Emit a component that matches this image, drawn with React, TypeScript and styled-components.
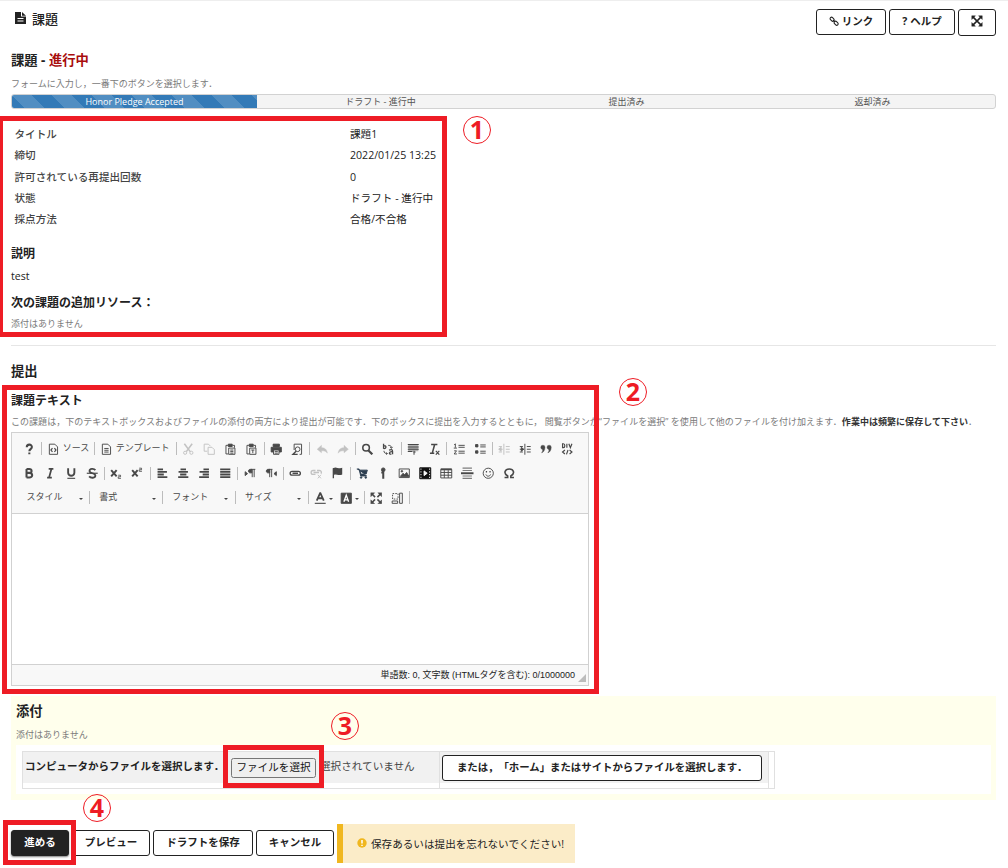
import React from "react";
import styled, { createGlobalStyle, css } from "styled-components";

const Global = createGlobalStyle`
  * { box-sizing: border-box; }
  html, body { margin: 0; padding: 0; background: #fff; }
  body {
    width: 1008px; height: 868px; overflow: hidden;
    font-family: "Open Sans", "Noto Sans CJK JP", sans-serif;
    font-size: 10.6px; color: #222;
    text-spacing-trim: space-all;
  }
`;

const Page = styled.main`
  position: relative;
  width: 1008px;
  height: 868px;
  overflow: hidden;
  border-top: 1px solid #eeeeee;
  padding: 0 12px 0 11px;
  display: flex;
  flex-direction: column;
  white-space: nowrap;
`;

const Header = styled.header`
  height: 38px;
  display: flex;
  justify-content: space-between;
  align-items: flex-start;
`;

const ToolTitle = styled.div`
  display: flex;
  align-items: center;
  gap: 6px;
  height: 22px;
  margin: 6px 0 0 4px;
  font-size: 13px;
  font-weight: 500;
  svg { margin-top: -1px; }
`;

const HeaderActions = styled.div`
  display: flex;
  gap: 3px;
  margin-top: 8px;
`;

const Button = styled.button<{ $w: number; $h?: number; $primary?: boolean }>`
  width: ${(p) => p.$w}px;
  height: ${(p) => p.$h ?? 26}px;
  padding: 0 0 3px;
  display: flex;
  align-items: center;
  justify-content: center;
  gap: 3px;
  border: 1px solid #222;
  border-radius: 3px;
  background: ${(p) => (p.$primary ? "#222" : "#fff")};
  color: ${(p) => (p.$primary ? "#fff" : "#222")};
  font: 700 10.5px "Open Sans", "Noto Sans CJK JP", sans-serif;
  white-space: nowrap;
  ${(p) => p.$primary && css`box-shadow: 0 1px 2px rgba(0, 0, 0, 0.5);`}
`;

const Heading = styled.h2<{ $size: number; $h: number; $mt?: number }>`
  margin: ${(p) => p.$mt ?? 0}px 0 0;
  height: ${(p) => p.$h}px;
  line-height: ${(p) => p.$h}px;
  font-size: ${(p) => p.$size}px;
  font-weight: 700;
  color: #222;
`;

const Status = styled.span`
  color: #a80d0d;
`;

const Hint = styled.p<{ $h: number; $mt?: number; $spacing?: number }>`
  margin: ${(p) => p.$mt ?? 0}px 0 0;
  height: ${(p) => p.$h}px;
  line-height: ${(p) => p.$h}px;
  font-size: 9px;
  letter-spacing: ${(p) => p.$spacing ?? 0}px;
  color: #7a7a7a;
  strong { color: #333; }
`;

const Progress = styled.div`
  display: flex;
  height: 15px;
  margin-top: 1px;
  border: 1px solid #d2d2d2;
  border-radius: 3px;
  background: #f4f4f4;
  overflow: hidden;
`;

const Step = styled.div<{ $active?: boolean }>`
  flex: 1;
  text-align: center;
  font-size: 9px;
  line-height: 14px;
  padding-left: 1px;
  color: #555;
  ${(p) =>
    p.$active &&
    css`
      margin: -1px 0 -1px -1px;
      line-height: 15px;
      color: #fff;
      font-weight: 500;
      font-size: 9px;
      background: #337ab7
        linear-gradient(45deg, rgba(255, 255, 255, 0.15) 25%, transparent 25%, transparent 50%,
          rgba(255, 255, 255, 0.15) 50%, rgba(255, 255, 255, 0.15) 75%, transparent 75%, transparent)
        0 0 / 40px 40px;
    `}
`;

const Summary = styled.dl`
  margin: 15px 0 0 3.5px;
  display: grid;
  grid-template-columns: 335.5px 1fr;
  grid-auto-rows: 21.3px;
  line-height: 21px;
  dt { color: #444; font-weight: 500; }
  dd { margin: 0; }
`;

const Paragraph = styled.p`
  margin: 3px 0 0;
  height: 18px;
  line-height: 18px;
`;

const Divider = styled.hr`
  margin: 12px 0 0;
  border: 0;
  border-top: 1px solid #e6e6e6;
  width: 100%;
`;

const Editor = styled.section`
  width: 578px;
  height: 254px;
  margin-top: 1px;
  border: 1px solid #d1d1d1;
  display: flex;
  flex-direction: column;
`;

const Toolbar = styled.div`
  height: 81px;
  background: #f8f8f8;
  border-bottom: 1px solid #d1d1d1;
  padding: 3px 0 0 6.5px;
`;

const ToolRow = styled.div<{ $h: number }>`
  height: ${(p) => p.$h}px;
  display: flex;
  align-items: center;
`;

const Tool = styled.span<{ $w?: number; $off?: boolean }>`
  flex: none;
  width: ${(p) => p.$w ?? 21}px;
  height: 16px;
  display: flex;
  align-items: center;
  justify-content: ${(p) => (p.$w ? "flex-start" : "center")};
  gap: 3px;
  padding-left: ${(p) => (p.$w ? 4 : 0)}px;
  font-size: 9px;
  line-height: 14px;
  color: #484848;
  opacity: ${(p) => (p.$off ? 0.3 : 1)};
`;

const ToolLabel = styled.span`
  padding-bottom: 2px;
`;

const Sep = styled.i`
  flex: none;
  width: 1px;
  height: 13px;
  margin: 0 1px 0 1.67px;
  background: #bcbcbc;
`;

const Combo = styled.span`
  flex: none;
  width: 69.2px;
  height: 16px;
  padding: 0 5px 0 8px;
  display: flex;
  align-items: center;
  justify-content: space-between;
  font-size: 9px;
  line-height: 14px;
  color: #484848;
`;

const Caret = styled.i`
  flex: none;
  border: 2.5px solid transparent;
  border-top-color: #444;
  border-bottom: 0;
  margin-top: 2px;
`;

const EditArea = styled.div`
  flex: 1;
  background: #fff;
`;

const EditorFooter = styled.div`
  height: 21px;
  display: flex;
  justify-content: flex-end;
  align-items: center;
  gap: 3px;
  padding: 0 2px 2px 0;
  border-top: 1px solid #d1d1d1;
  background: #f8f8f8;
  color: #222;
  font: 9px "Liberation Sans", "Noto Sans CJK JP", sans-serif;
`;

const Grip = styled.i`
  width: 0;
  height: 0;
  margin-top: 8px;
  border-left: 8px solid transparent;
  border-bottom: 8px solid #bcbcbc;
`;

const Attachments = styled.section`
  height: 104px;
  margin-top: 10px;
  padding: 4px 5px 0;
  background: #ffffec;
`;

const AttachBody = styled.div`
  height: 49px;
  margin-top: 1px;
  padding: 6px;
  background: #fff;
`;

const AttachTable = styled.div`
  width: 753px;
  height: 38px;
  display: flex;
  border: 1px solid #e0e0e0;
`;

const Cell = styled.div<{ $w: number }>`
  width: ${(p) => p.$w}px;
  height: 31px;
  display: flex;
  align-items: center;
  background: #f1f1f1;
  strong { width: 205px; padding-left: 2px; margin-top: -5px; font-size: 10.5px; }
  ${Button} { margin-left: 2px; font-size: 10.4px; }
`;

const CellColumn = styled.div`
  height: 36px;
  border-right: 1px solid #e0e0e0;
`;

const FileButton = styled.button`
  width: 85px;
  height: 20px;
  padding: 0 0 3px;
  border: 1px solid #767676;
  border-radius: 2.5px;
  background: #efefef;
  color: #111;
  font: 10.6px "Open Sans", "Noto Sans CJK JP", sans-serif;
  white-space: nowrap;
  margin-left: 3px;
`;

const FileState = styled.span`
  margin: -4px 0 0 4px;
  color: #444;
`;

const Actions = styled.footer`
  display: flex;
  gap: 3px;
  margin-top: 24px;
  align-items: flex-start;
  ${Button} { margin-top: 6px; }
`;

const Notice = styled.div`
  width: 238px;
  height: 39px;
  border-left: 6px solid #f0b71f;
  background: #fbecc8;
  display: flex;
  align-items: center;
  gap: 4px;
  padding: 0 0 1px 14px;
`;

const Frame = styled.div<{ $x: number; $y: number; $w: number; $h: number }>`
  position: absolute;
  left: ${(p) => p.$x}px;
  top: ${(p) => p.$y - 1}px;
  width: ${(p) => p.$w}px;
  height: ${(p) => p.$h}px;
  border: 5px solid #ee1c25;
`;

const Marker = styled.span<{ $x: number; $y: number }>`
  position: absolute;
  left: ${(p) => p.$x - 14}px;
  top: ${(p) => p.$y - 15}px;
  width: 28px;
  height: 28px;
  border: 1px solid #ee1c25;
  border-radius: 50%;
  color: #ee1c25;
  font: 700 25px/25px "Noto Sans", "Open Sans", sans-serif;
  text-align: center;
`;

const shapes: Record<string, React.ReactNode> = {
  help: <path d="M4.8 5.5C4.8 1 11.4 1 11.4 5.2c0 2.6-3.3 2.7-3.3 5.2M8.1 12.2v2.3" strokeWidth="2.6" />,
  source: <><path d="M3 1.5h7l3.500 3.500v9.500H3z" /><path d="M7 6.500L5 9l2 2.500M9.500 6.500l2 2.500-2 2.500" strokeWidth="1.500" /></>,
  template: <><path d="M3 1.5h7l3.500 3.500v9.500H3z" /><path d="M5.500 7h5.500M5.500 9.300h5.500M5.500 11.600h5.500" /></>,
  cut: <><path d="M3 1l7.500 10M13 1L5.500 11" strokeWidth="2" /><circle cx="4" cy="12.500" r="2" /><circle cx="12" cy="12.500" r="2" /></>,
  copy: <><path d="M5.500 10.500h-4v-9h5.500l2.500 2.500" /><path d="M6.500 5.500h5l3 3v6h-8z" /></>,
  paste: <><path d="M5 3H2.500v11h3M11 3h2.500v3" /><path d="M5.500 1.500h5v3h-5z" fill="currentColor" /><path d="M6 6.500h8v8H6zM8 9h4M8 11h4M8 13h4" /></>,
  pasteText: <><path d="M5 3H2.500v11h3M11 3h2.500v3" /><path d="M5.500 1.500h5v3h-5z" fill="currentColor" /><path d="M6 6.500h8v8H6zM8 9h4M10 9v4" /></>,
  print: <><path d="M4 1.500h8v3H4z" fill="currentColor" /><path d="M1.500 5.500h13v6h-13z" fill="currentColor" /><path d="M4.500 9h7v5.500h-7z" fill="#f8f8f8" /><path d="M6 11h4M6 13h4" /></>,
  preview: <><path d="M4 9V1.500h9.500v13H11" /><circle cx="8.500" cy="8" r="3" /><path d="M6.500 10.500L2.500 14.500h6" strokeWidth="1.800" /></>,
  undo: <path d="M7 3L1.500 8 7 12.500V10c4 0 6 .5 7.500 3C14 8 11 6 7 6z" fill="currentColor" strokeWidth=".5" />,
  redo: <path d="M9 3l5.500 5L9 12.500V10c-4 0-6 .5-7.500 3C2 8 5 6 9 6z" fill="currentColor" strokeWidth=".5" />,
  find: <><circle cx="6.500" cy="6" r="4.200" strokeWidth="2" /><path d="M9.500 9.500l5 5" strokeWidth="2.800" /></>,
  replace: <><path d="M2 1v6.500M2 4c4-2 4 4 0 3M9 9c4-1.500 4.500 0 4.500 2v3.500M13.500 11c-5-.5-5 4-1.500 3.200" strokeWidth="1.700" /><path d="M8 3c3 0 4 1 4 3M2.500 10c0 2.500 1.500 3.500 4 3.500M10.500 5l1.500 2 1.500-2M5.500 12l1.500 1.500-1.500 1.500" /></>,
  selectAll: <><path d="M1.500 1.500h13v9h-13z" fill="currentColor" opacity=".4" stroke="none" /><path d="M1 2h14M1 5h14M1 8h14M1 11h6M9 10v5M8 11.500h3" strokeWidth="1.300" /></>,
  clear: <><path d="M4 2h8M8.500 2L5.500 13M2.500 13h5.500" strokeWidth="2" /><path d="M10 10l4.500 5M14.500 10L10 15" strokeWidth="1.400" /></>,
  ol: <><path d="M3 1v5M1.500 2.500L3 1M1 6.500h4M1.500 10h3l-3 4h3.500" /><path d="M7 3h8M7 5.500h8M7 10.500h8M7 13h8" /></>,
  ul: <><path d="M2 2h3v3H2zM2 10h3v3H2z" fill="currentColor" /><path d="M8 2.500h7M8 5h7M8 10.500h7M8 13h7" /></>,
  outdent: <><path d="M7.500 1v14M10 4.500h5M10 8h5M10 11.500h5M1 4.500h4M1 11.500h4M1 8h5" /><path d="M4 5.500L1 8l3 2.500z" fill="currentColor" /></>,
  indent: <><path d="M7.500 1v14M10 4.500h5M10 8h5M10 11.500h5M1 4.500h4M1 11.500h4M1 8h5" /><path d="M3 5.500L6 8l-3 2.500z" fill="currentColor" /></>,
  quote: <path d="M1 5.500a2.700 2.700 0 1 1 5.400 0c0 4-2 6.500-4.400 7 1-1.200 1.600-2.500 1.600-4C2 8.300 1 7 1 5.500zM9 5.500a2.700 2.700 0 1 1 5.400 0c0 4-2 6.500-4.400 7 1-1.200 1.600-2.500 1.600-4C10 8.300 9 7 9 5.500z" fill="currentColor" strokeWidth=".5" />,
  div: <><path d="M2 1v5h1c2.500 0 2.500-5 0-5zM7.500 1v5M10 1l2 5 2-5" strokeWidth="1.500" /><path d="M5 9l-3 2.500L5 14M11 9l3 2.500-3 2.500M9 9l-2 5.500" strokeWidth="1.500" /></>,
  bold: <path d="M4.500 2.500v11M4.500 2.500H8c4 0 4 5 0 5H4.500M8 7.500c5 0 5 6 0 6H4.500" strokeWidth="2.600" />,
  italic: <path d="M6 2.500h6M4 13.500h6M9.500 2.500L6.500 13.500" strokeWidth="2.200" />,
  underline: <><path d="M4 1.500v6c0 5 8 5 8 0v-6" strokeWidth="2.400" /><path d="M3 14.500h10" strokeWidth="1.400" /></>,
  strike: <><path d="M12 4C10 1.500 4.500 2 4.500 5c0 4 7.500 2 7.500 6 0 3.500-6 3.500-8 1" strokeWidth="2.300" /><path d="M1 8h14" strokeWidth="1.500" /></>,
  sub: <><path d="M1.500 4l7 8M8.500 4l-7 8" strokeWidth="2.500" /><path d="M10.500 10.500h3v2h-3v2h3.500" strokeWidth="1.100" /></>,
  sup: <><path d="M1.500 4l7 8M8.500 4l-7 8" strokeWidth="2.500" /><path d="M10.500 1.500h3v2h-3v2h3.500" strokeWidth="1.100" /></>,
  left: <path d="M2 3h7M2 6.300h12M2 9.600h8M2 13h12.500" strokeWidth="2.300" />,
  center: <path d="M4.500 3h7M2 6.300h12M4 9.600h8M1.500 13h13" strokeWidth="2.300" />,
  right: <path d="M7 3h7M2 6.300h12M6 9.600h8M1.500 13H14" strokeWidth="2.300" />,
  justify: <path d="M1.500 3h13M1.500 6.300h13M1.500 9.600h13M1.500 13h13" strokeWidth="2.300" />,
  ltr: <><path d="M1.500 6l3 2.500-3 2.500z" fill="currentColor" /><path d="M10 3H8c-3 0-3 4.500 0 4.500h2zM10.500 3v10M13 3v10M9 3h5.500" fill="currentColor" /></>,
  rtl: <><path d="M14.500 6l-3 2.500 3 2.500z" fill="currentColor" /><path d="M6 3H4C1 3 1 7.500 4 7.500h2zM6 3v10M8.500 3v10M5 3h4.500" fill="currentColor" /></>,
  link: <><path d="M7 5.500H4c-3.400 0-3.400 5 0 5h3M9 5.500h3c3.400 0 3.400 5 0 5H9M4.500 8h7M6.500 5.500h3M6.500 10.500h3" strokeWidth="1.700" /></>,
  unlink: <><path d="M7 4.500H4c-3.400 0-3.400 5 0 5h3M9 4.500h3c2.800 0 3 2.500 2 4M4.500 7h7" strokeWidth="1.700" /><path d="M10 10l4 4.500M14 10l-4 4.500" /></>,
  flag: <path d="M3 1.500v13M3.500 2c4-1.500 5 1.500 10 0v7c-5 1.500-6-1.500-10 0z" fill="currentColor" strokeWidth="1.700" />,
  cart: <><path d="M1 2.500h3l2 9h8M5 4h9.500L13 9H6z" fill="currentColor" /><circle cx="6.500" cy="13.500" r="1" fill="currentColor" /><circle cx="12.500" cy="13.500" r="1" fill="currentColor" /></>,
  key: <><circle cx="8" cy="3.500" r="2.300" fill="currentColor" /><path d="M8 5v10M5.500 7h3" strokeWidth="2.600" /></>,
  image: <><path d="M1.500 2.500h13v11h-13z" /><path d="M3 12l3.500-4 2 2L11 7l3 5z" fill="currentColor" /><circle cx="5" cy="5.500" r="1" fill="currentColor" /></>,
  film: <><path d="M1 1h14v14H1z" fill="#111" stroke="#111" /><path d="M2.500 2v12M13.500 2v12" stroke="#fff" strokeDasharray="1.5 2" /><path d="M6.500 5v6l4-3z" fill="#fff" stroke="#fff" /></>,
  table: <><path d="M1 3h14v11H1zM1 7h14M1 10.500h14M5.500 4v10M10.500 4v10" /><path d="M1 3h14" strokeWidth="2.500" /></>,
  rule: <><path d="M2 1.500h12M2 4.500h12M2 11.500h12M2 14.500h12" opacity=".7" strokeWidth="1.500" /><path d="M0 8h16" strokeWidth="2.500" /></>,
  smile: <><circle cx="8" cy="8" r="6.500" /><path d="M5 9.500c1 3 5 3 6 0" /><path d="M5.700 5v2M10.300 5v2" strokeWidth="1.600" /></>,
  omega: <path d="M2 13.500h4v-2C0 8 2.500 2.500 8 2.500s8 5.500 2 9v2h4" strokeWidth="2" />,
  color: <><path d="M3.500 11L7.800 1.500h.4L12.500 11M5 8h6" strokeWidth="2.300" /><path d="M1 14.500h14" strokeWidth="1.400" /></>,
  bgcolor: <><path d="M1.500 1.500h13v13h-13z" fill="currentColor" /><path d="M5 12.500L8 4l3 8.500M6 10h4" stroke="#fff" strokeWidth="1.700" /></>,
  maximize: <><path d="M2 2l4.500 4.500M14 2L9.500 6.500M2 14l4.500-4.500M14 14L9.500 9.500" strokeWidth="2" /><path d="M1 1h5L1 6zM15 1h-5l5 5zM1 15h5l-5-5zM15 15h-5l5-5z" fill="currentColor" strokeWidth=".5" /></>,
  expand: <><path d="M2.500 2.500l11 11M13.500 2.500l-11 11" strokeWidth="2" /><path d="M1 1h5L1 6zM15 1h-5l5 5zM1 15h5l-5-5zM15 15h-5l5-5z" fill="currentColor" strokeWidth=".5" /></>,
  blocks: <><path d="M2 2h7v7H2z" strokeDasharray="2 1.500" /><path d="M11 1.500h3.500v13H11zM1.500 11.500h7v3h-7z" /></>,
};

const Icon = ({ name, size = 12.5, color }: { name: string; size?: number; color?: string }) => (
  <svg width={size} height={size} viewBox="0 0 16 16" fill="none" stroke="currentColor" strokeWidth="1.2" color={color}>
    {shapes[name]}
  </svg>
);

const tools = (names: string) =>
  names.split(" ").map((n, i) => {
    if (n === "|") return <Sep key={i} />;
    const off = n.startsWith("-");
    const name = off ? n.slice(1) : n;
    return (
      <Tool key={i} $off={off}>
        <Icon name={name} color={name === "cart" ? "#2c3e50" : undefined} />
      </Tool>
    );
  });

const details = [
  ["タイトル", "課題1"],
  ["締切", "2022/01/25 13:25"],
  ["許可されている再提出回数", "0"],
  ["状態", "ドラフト - 進行中"],
  ["採点方法", "合格/不合格"],
];

export default function App() {
  return (
    <>
      <Global />
      <Page>
        <Header>
          <ToolTitle>
            <svg width="11" height="12" viewBox="0 0 11 12">
              <path d="M0 0h6v4.500h5V12H0z" fill="#222" />
              <path d="M7 0l4 3.700H7z" fill="#222" />
              <path d="M2.500 6.500h6M2.500 9h6" stroke="#fff" />
            </svg>
            課題
          </ToolTitle>
          <HeaderActions>
            <Button $w={70}>
              <svg width="10" height="10" viewBox="0 0 10 10" fill="none" stroke="#222" strokeWidth="1.1">
                <rect x="-2" y="-1.400" width="4.500" height="2.900" rx="1.400" transform="translate(3 3) rotate(45)" />
                <rect x="-2" y="-1.400" width="4.500" height="2.900" rx="1.400" transform="translate(7 7) rotate(45)" />
                <path d="M4 4l2 2" />
              </svg>
              リンク
            </Button>
            <Button $w={66}>
              <span>?</span>ヘルプ
            </Button>
            <Button $w={38} $h={27}>
              <Icon name="expand" size={12} />
            </Button>
          </HeaderActions>
        </Header>

        <Heading $size={13.33} $h={22} $mt={10}>
          課題 - <Status>進行中</Status>
        </Heading>
        <Hint $h={18} $mt={4}>フォームに入力し，一番下のボタンを選択します．</Hint>
        <Progress>
          <Step $active>Honor Pledge Accepted</Step>
          <Step>ドラフト - 進行中</Step>
          <Step>提出済み</Step>
          <Step>返却済み</Step>
        </Progress>

        <Summary>
          {details.map(([k, v]) => (
            <React.Fragment key={k}>
              <dt>{k}</dt>
              <dd>{v}</dd>
            </React.Fragment>
          ))}
        </Summary>

        <Heading $size={12} $h={20} $mt={14}>説明</Heading>
        <Paragraph>test</Paragraph>
        <Heading $size={12} $h={20} $mt={8}>次の課題の追加リソース：</Heading>
        <Hint $h={18} $mt={2}>添付はありません</Hint>
        <Divider />

        <Heading $size={13.33} $h={22} $mt={14}>提出</Heading>
        <Heading $size={12} $h={20} $mt={9}>課題テキスト</Heading>
        <Hint $h={18} $mt={2} $spacing={0.035}>
          この課題は，下のテキストボックスおよびファイルの添付の両方により提出が可能です．下のボックスに提出を入力するとともに， 閲覧ボタンか“ファイルを選択” を使用して他のファイルを付け加えます．
          <strong>作業中は頻繁に保存して下さい</strong>．
        </Hint>

        <Editor>
          <Toolbar>
            <ToolRow $h={25}>
              {tools("help |")}
              <Tool $w={49.5}><Icon name="source" /><ToolLabel>ソース</ToolLabel></Tool>
              <Sep />
              <Tool $w={78}><Icon name="template" /><ToolLabel>テンプレート</ToolLabel></Tool>
              {tools("| -cut -copy paste pasteText | print preview | -undo -redo | find replace | selectAll clear | ol ul | -outdent indent quote div")}
            </ToolRow>
            <ToolRow $h={24}>
              {tools("bold italic underline strike | sub sup | left center right justify | ltr rtl | link -unlink flag | cart key image film table rule smile omega")}
            </ToolRow>
            <ToolRow $h={25}>
              {["スタイル", "書式", "フォント", "サイズ"].map((t) => (
                <React.Fragment key={t}>
                  <Combo><ToolLabel>{t}</ToolLabel><Caret /></Combo>
                  <Sep />
                </React.Fragment>
              ))}
              <Tool $w={26}><Icon name="color" /><Caret /></Tool>
              <Tool $w={26}><Icon name="bgcolor" /><Caret /></Tool>
              {tools("| maximize blocks |")}
            </ToolRow>
          </Toolbar>
          <EditArea />
          <EditorFooter>
            単語数: 0, 文字数 (HTMLタグを含む): 0/1000000
            <Grip />
          </EditorFooter>
        </Editor>

        <Attachments>
          <Heading $size={13.33} $h={22}>添付</Heading>
          <Hint $h={18} $mt={4}>添付はありません</Hint>
          <AttachBody>
            <AttachTable>
              <CellColumn>
                <Cell $w={416}>
                  <strong>コンピュータからファイルを選択します．</strong>
                  <FileButton>ファイルを選択</FileButton>
                  <FileState>選択されていません</FileState>
                </Cell>
              </CellColumn>
              <CellColumn>
                <Cell $w={328}>
                  <Button $w={320}>または，「ホーム」またはサイトからファイルを選択します．</Button>
                </Cell>
              </CellColumn>
            </AttachTable>
          </AttachBody>
        </Attachments>

        <Actions>
          <Button $w={58} $primary>進める</Button>
          <Button $w={78}>プレビュー</Button>
          <Button $w={100}>ドラフトを保存</Button>
          <Button $w={78}>キャンセル</Button>
          <Notice>
            <svg width="10" height="10" viewBox="0 0 10 10">
              <circle cx="5" cy="5" r="4.700" fill="#f0b71f" />
              <path d="M5 2v3.500M5 6.700v1.400" stroke="#fff" strokeWidth="1.500" />
            </svg>
            保存あるいは提出を忘れないでください!
          </Notice>
        </Actions>

        <Frame $x={-2} $y={116} $w={449} $h={221} />
        <Frame $x={2} $y={385} $w={597} $h={309} />
        <Frame $x={223} $y={745} $w={101} $h={43} />
        <Frame $x={3} $y={820} $w={73} $h={45} />
        <Marker $x={477} $y={130}>1</Marker>
        <Marker $x={633} $y={392}>2</Marker>
        <Marker $x={345} $y={726}>3</Marker>
        <Marker $x={97} $y={808}>4</Marker>
      </Page>
    </>
  );
}
